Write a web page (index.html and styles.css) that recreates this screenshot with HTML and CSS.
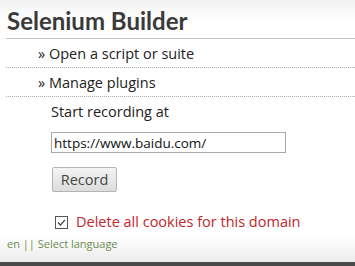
FILE: index.html
```html
<!DOCTYPE html>
<html>
<head>
<meta charset="utf-8">
<link rel="stylesheet" href="styles.css">
</head>
<body>
<div class="page">
  <h1 class="title">Selenium Builder</h1>
  <ul class="menu">
    <li class="menu-item">» Open a script or suite</li>
    <li class="menu-item">» Manage plugins</li>
  </ul>
  <div class="record">
    <div class="label">Start recording at</div>
    <input class="url" type="text" value="https://www.baidu.com/">
    <button class="btn">Record</button>
  </div>
  <label class="cookies">
    <span class="check"><svg width="13" height="13" viewBox="0 0 13 13"><rect x="0.5" y="0.5" width="12" height="12" fill="#fff" stroke="#555"/><path d="M3 6.5 L5.5 9 L10 3.8" fill="none" stroke="#444" stroke-width="1.2"/></svg></span>
    <span class="cookies-text">Delete all cookies for this domain</span>
  </label>
  <div class="lang">en || Select language</div>
</div>
<div class="bottom-bar"></div>
</body>
</html>
```
FILE: styles.css
```css
html, body {
  margin: 0;
  padding: 0;
  height: 266px;
  overflow: hidden;
}
body {
  font-family: "Open Sans", "DejaVu Sans", sans-serif;
  background: linear-gradient(#f2f2f2 0px, #ffffff 22px, #ffffff 236px, #ececec 262px);
  color: #222;
  display: flex;
  flex-direction: column;
}
.page {
  flex: 1;
  padding: 0 0 0 6px;
}
.title {
  margin: 0;
  padding: 7px 0 3px 1px;
  font-family: "Lato", "Open Sans", sans-serif;
  font-size: 24px;
  line-height: 28px;
  font-weight: bold;
  color: #3a3a3a;
  border-bottom: 1px solid #c4c4c4;
}
.menu {
  list-style: none;
  margin: 0;
  padding: 0;
}
.menu-item {
  padding: 5px 0 3px 32px;
  font-size: 14.5px;
  line-height: 20px;
  border-bottom: 1px dotted #aaa;
  color: #222;
}
.record {
  padding: 4px 0 0 45px;
  display: flex;
  flex-direction: column;
  align-items: flex-start;
}
.label {
  font-size: 14.5px;
  line-height: 22px;
  color: #222;
}
.url {
  margin-top: 9px;
  width: 235px;
  height: 21px;
  box-sizing: border-box;
  border: 1px solid #a9a9a9;
  padding: 0 2px;
  font-family: "Open Sans", "DejaVu Sans", sans-serif;
  font-size: 13.5px;
  color: #111;
  background: #fff;
}
.btn {
  margin-top: 14px;
  margin-left: 1px;
  width: 65px;
  height: 25px;
  border: 1px solid #b5b5b5;
  border-radius: 2px;
  background: linear-gradient(#f4f4f4, #dcdcdc);
  font-family: "Open Sans", "DejaVu Sans", sans-serif;
  font-size: 14.5px;
  color: #444;
  padding: 0;
}
.cookies {
  display: flex;
  align-items: center;
  gap: 8px;
  margin: 20px 0 0 49px;
}
.check {
  display: flex;
}
.cookies-text {
  font-size: 14.5px;
  line-height: 20px;
  color: #c0262c;
}
.lang {
  margin-top: 5px;
  margin-left: 1px;
  font-size: 11px;
  line-height: 14px;
  color: #6b8a4f;
}
.bottom-bar {
  height: 4px;
  background: #4a4a4a;
}
```
